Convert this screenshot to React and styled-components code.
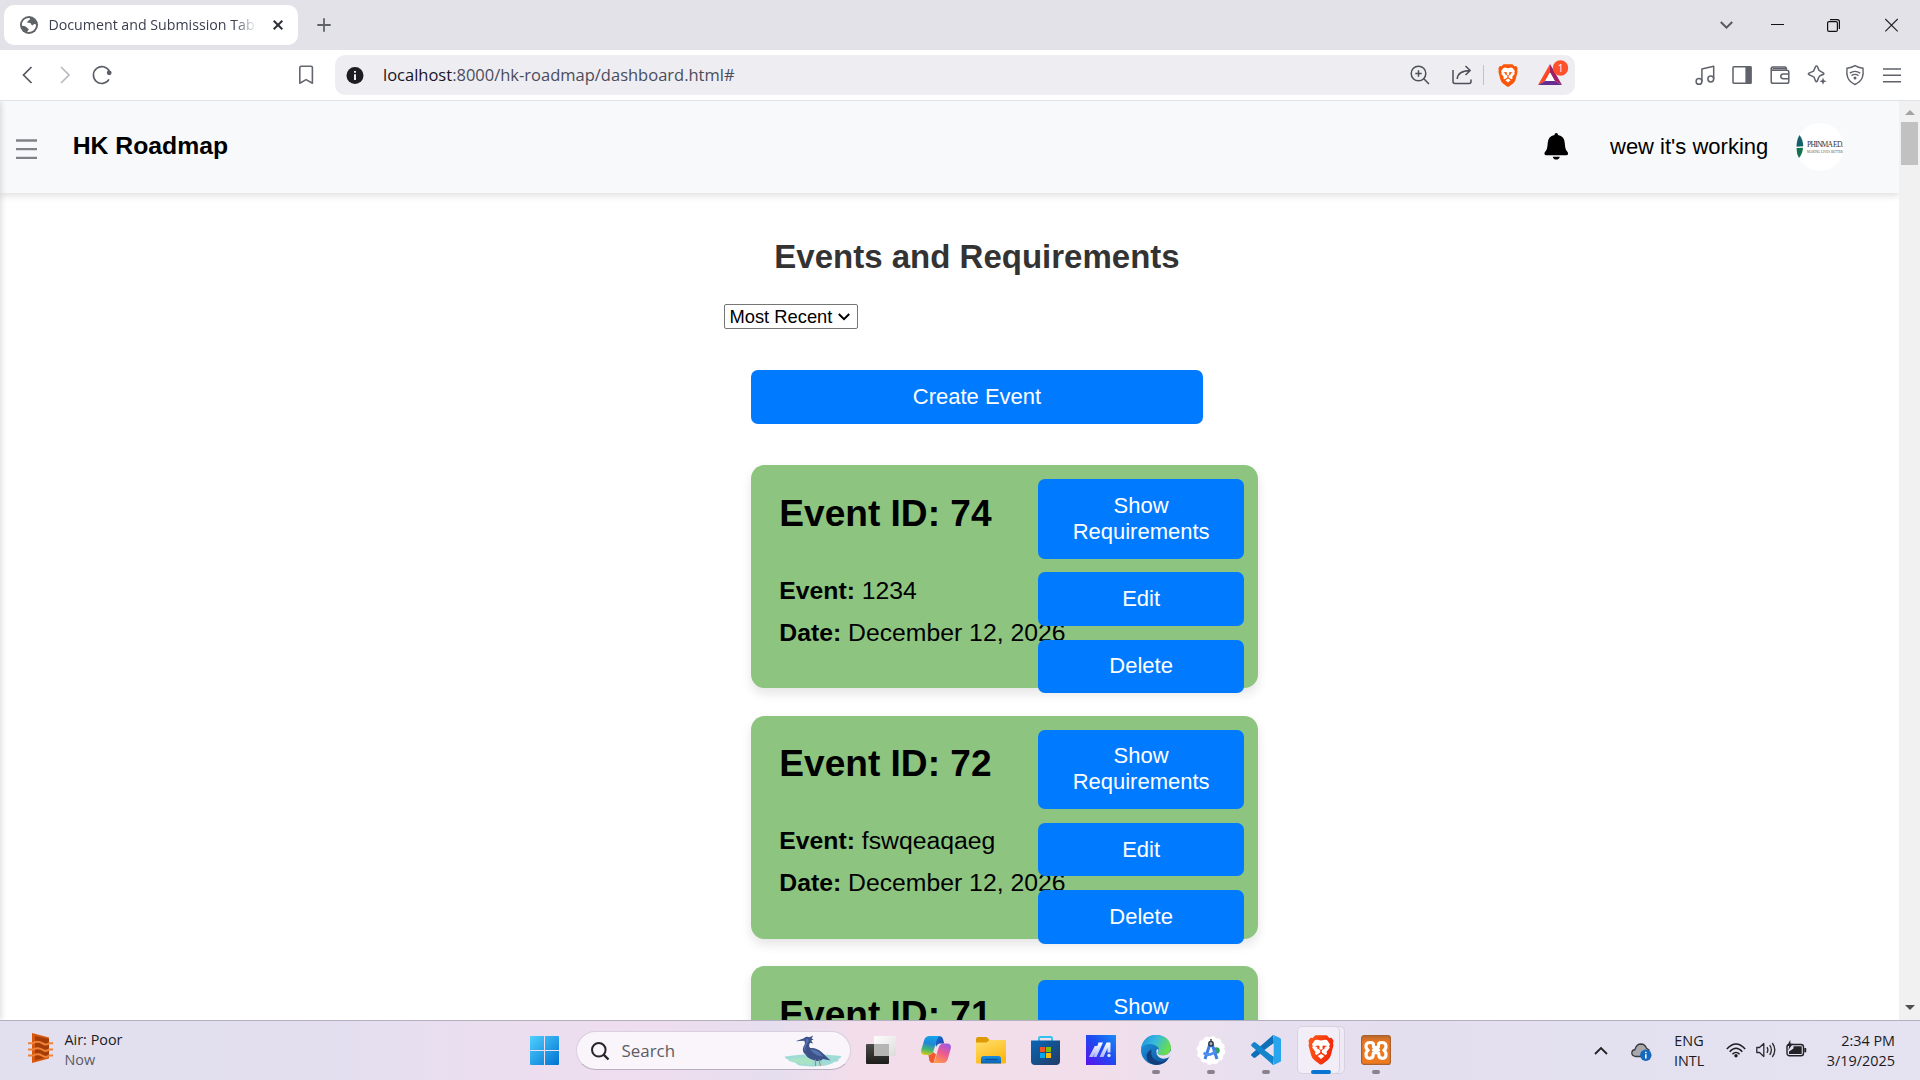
import React from "react";
import styled, { createGlobalStyle } from "styled-components";

const GlobalStyle = createGlobalStyle`
  *, *::before, *::after { box-sizing: border-box; }
  html, body { margin: 0; padding: 0; overflow: hidden; background: #fff; }
`;

const UI = `"Open Sans", "Noto Sans", sans-serif`;
const ARIAL = `"Liberation Sans", Arial, sans-serif`;

const Screen = styled.div`
  width: 1920px;
  height: 1080px;
  display: flex;
  flex-direction: column;
  overflow: hidden;
  background: #fff;
`;

const Glyph = styled.svg`
  display: block;
  flex: none;
  width: ${(p) => p.$w || 20}px;
  height: ${(p) => p.$h || p.$w || 20}px;
  margin-left: ${(p) => (p.$ml === "auto" ? "auto" : `${p.$ml || 0}px`)};
  margin-top: ${(p) => p.$mt || 0}px;
  margin-bottom: ${(p) => p.$mb || 0}px;
  overflow: visible;
  fill: none;
  stroke: ${(p) => p.$stroke || "none"};
  stroke-width: ${(p) => p.$sw || 1.5};
`;

/* ---------- browser chrome ---------- */

const TabStrip = styled.div`
  flex: none;
  height: 50px;
  background: #e3e2e8;
  display: flex;
  align-items: center;
  padding-left: 4px;
`;

const Tab = styled.div`
  width: 294px;
  height: 40px;
  border-radius: 10px;
  background: #fff;
  display: flex;
  align-items: center;
  padding-left: 16px;
`;

const TabTitle = styled.div`
  margin-left: 10.5px;
  width: 207px;
  overflow: hidden;
  white-space: nowrap;
  font: 14.2px/20px ${UI};
  color: #3b3e4f;
  mask-image: linear-gradient(to right, #000 185px, transparent 208px);
`;

const WindowControls = styled.div`
  margin-left: auto;
  padding-right: 22px;
  display: flex;
  align-items: center;
`;

const Toolbar = styled.div`
  flex: none;
  height: 51px;
  border-bottom: 1px solid #e1e1e8;
  background: #fff;
  display: flex;
  align-items: center;
  padding-left: 18px;
`;

const AddressBar = styled.div`
  width: 1240px;
  height: 40px;
  margin-left: 19px;
  border-radius: 10px;
  background: #eeedf2;
  display: flex;
  align-items: center;
  padding-left: 11px;
`;

const Url = styled.div`
  width: 1000px;
  margin-left: 19px;
  white-space: nowrap;
  font: 16.5px/22px ${UI};
  color: #4a4c5c;
  b { font-weight: 400; color: #15151f; }
`;

const ToolIcons = styled.div`
  margin-left: 120px;
  display: flex;
  gap: 17.4px;
`;

const Divider = styled.div`
  width: 1px;
  height: 20px;
  margin-left: 11px;
  background: #c3c2cb;
`;

/* ---------- web page ---------- */

const Viewport = styled.div`
  flex: none;
  height: 919px;
  display: flex;
  overflow: hidden;
`;

const Page = styled.div`
  position: relative;
  width: 1899px;
  height: 100%;
  overflow: hidden;
  font-family: ${ARIAL};
  &::before {
    content: "";
    position: absolute;
    z-index: 2;
    left: -10px;
    top: 0;
    bottom: 0;
    width: 10px;
    box-shadow: 0 0 7px rgba(0, 0, 0, 0.2);
  }
`;

const Header = styled.header`
  height: 92px;
  background: #f8f9fb;
  box-shadow: 0 3px 7px rgba(0, 0, 0, 0.12);
  display: flex;
  align-items: center;
  padding: 0 55.5px 0 16px;
`;

const Brand = styled.div`
  margin-left: 35.7px;
  font-size: 24.75px;
  line-height: 28px;
  font-weight: 700;
  color: #000;
  padding-bottom: 2px;
`;

const User = styled.div`
  margin-left: 41.5px;
  width: 161px;
  white-space: nowrap;
  font-size: 22px;
  line-height: 26px;
  color: #000;
  padding-bottom: 1px;
`;

const Avatar = styled.div`
  width: 48px;
  height: 48px;
  margin-left: 24.500px;
  border-radius: 50%;
  background: #fff;
`;

const Main = styled.main`
  margin-left: 723.5px;
  width: 507px;
  padding-top: 45px;
`;

const Heading = styled.h1`
  margin: 0;
  text-align: center;
  font-size: 33px;
  line-height: 38px;
  font-weight: 700;
  color: #333;
`;

const Sort = styled.div`
  margin-top: 28px;
  width: 134px;
  height: 25px;
  border: 1px solid #767676;
  border-radius: 2px;
  background: #fff;
  display: flex;
  align-items: center;
  justify-content: space-between;
  padding: 0 7px 0 5px;
  font-size: 18.33px;
  line-height: 22px;
  white-space: nowrap;
  color: #000;
`;

const Button = styled.button`
  display: block;
  width: 100%;
  border: 0;
  border-radius: 6.9px;
  padding: 13.75px 27px;
  background: #007bff;
  color: #fff;
  font: 22px/26px ${ARIAL};
  text-align: center;
`;

const Content = styled.div`
  margin-top: 41px;
  padding: 0 27.5px;
`;

const CardList = styled.div`
  margin-top: 41.9px;
  width: 507px;
  display: flex;
  flex-direction: column;
  gap: 27.5px;
`;

const Card = styled.section`
  position: relative;
  height: 223px;
  border-radius: 13.75px;
  background: #8dc480;
  box-shadow: 0 5.5px 11px rgba(0, 0, 0, 0.1);
  padding: 26.5px 28.3px;
  color: #000;
  h2 { margin: 0 0 35px; font-size: 37.1px; line-height: 43px; font-weight: 700; }
  p { margin: 0; font-size: 24.75px; line-height: 42px; white-space: nowrap; }
`;

const CardActions = styled.div`
  position: absolute;
  top: 13.75px;
  right: 13.75px;
  width: 206.25px;
  display: flex;
  flex-direction: column;
  gap: 13.75px;
`;

const Scrollbar = styled.div`
  width: 21px;
  height: 100%;
  background: #f1f1f1;
  display: flex;
  flex-direction: column;
  align-items: center;
  padding: 9px 0 10px;
`;

const Thumb = styled.div`
  width: 17px;
  height: 43px;
  margin-top: 7px;
  margin-bottom: auto;
  background: #c1c1c1;
`;

/* ---------- taskbar ---------- */

const Taskbar = styled.footer`
  flex: none;
  height: 60px;
  border-top: 1px solid #b5b0bf;
  background: linear-gradient(
    to right,
    #e2e0ef 0px, #e3dfef 330px, #ebdeef 500px, #eeddef 650px, #e5deee 775px,
    #f3ddea 860px, #f2deeb 1100px, #ece0ee 1170px, #e5dfef 1300px, #e3e0f0 1600px, #e5e2f1 1920px
  );
  display: flex;
  align-items: flex-start;
  font-family: ${UI};
`;

const Weather = styled.div`
  width: 530px;
  padding: 9px 0 0 28px;
  display: flex;
`;

const Lines = styled.div`
  font-size: 14.4px;
  line-height: 20px;
  color: #1b1b1f;
  white-space: nowrap;
  text-align: ${(p) => p.$align || "left"};
  margin-left: ${(p) => p.$ml || 0}px;
  width: ${(p) => (p.$w ? `${p.$w}px` : "auto")};
  small { display: block; font-size: inherit; color: ${(p) => p.$sub || "inherit"}; }
`;

const SearchBox = styled.div`
  width: 275px;
  height: 39px;
  margin: 10px 2px 0 17px;
  border: 1px solid #d9cfdf;
  border-bottom-color: #b9aec0;
  border-radius: 20px;
  background: #f9f5fb;
  display: flex;
  align-items: center;
  padding: 0 8px 0 14px;
  font-size: 16.9px;
  color: #5d5b62;
  span { margin: 0 auto 0 12.500px; line-height: 22px; }
`;

const TaskButton = styled.div`
  position: relative;
  width: 55px;
  height: 59px;
  padding-top: 14px;
  display: flex;
  flex-direction: column;
  align-items: center;
  gap: 5px;
`;

const Indicator = styled.i`
  width: ${(p) => (p.$active ? 20 : 8)}px;
  height: 4px;
  border-radius: 2px;
  background: ${(p) => (p.$active ? "#0a74d4" : "#87828c")};
`;

const ActiveTaskButton = styled(TaskButton)`
  &::before, &::after {
    content: "";
    position: absolute;
    top: 5px;
    width: 43px;
    height: 48px;
    border-radius: 5px;
    border: 1px solid #d8d2e0;
  }
  &::before { left: 8.5px; background: #eee9f4; }
  &::after { left: 3.5px; background: #f2eef7; }
  & > * { position: relative; z-index: 1; }
`;

const Tray = styled.div`
  margin-left: auto;
  padding: 10px 25px 0 0;
  display: flex;
`;

function BraveLion({ w = 20, h = 23, ml, id, flat }) {
  return (
    <Glyph $w={w} $h={h} $ml={ml} viewBox="0 0 20 23">
      <defs>
        <linearGradient id={id} x1="0" x2="1" y1="0" y2="0.3">
          <stop offset="0" stopColor={flat ? "#fb5607" : "#ff5a1a"} />
          <stop offset="1" stopColor={flat ? "#fb5607" : "#f2280a"} />
        </linearGradient>
      </defs>
      <path
        fill={`url(#${id})`}
        d="M5.6.2H14.4L16.4 2.2 18.2 2.1 19.7 4.6 19.2 6.2 19.6 7.8 17.6 15.6Q17 18 15 19.4L11 22.4Q10 23 9 22.4L5 19.4Q3 18 2.4 15.6L.4 7.8.8 6.2.3 4.6 1.8 2.1 3.6 2.2Z"
      />
      <path
        fill="#fff"
        d="M10 4.2 13 3.6 14.6 3.9 16.9 7 16.3 8.6 16.7 9.8 14.2 13 14.7 14.4 13.4 15.3 11.4 14 10.8 13.7 10.5 12.2 10.9 11.5 13.4 9.9 12.6 9.4 14.9 8.5 11.8 8.1 11.1 8.6 11.3 10.8 10 11.3 8.7 10.8 8.9 8.6 8.2 8.1 5.1 8.5 7.4 9.4 6.6 9.9 9.1 11.5 9.5 12.2 9.2 13.7 8.6 14 6.6 15.3 5.3 14.4 5.8 13 3.3 9.8 3.7 8.6 3.1 7 5.4 3.9 7 3.6Z"
      />
      <path fill="#fff" d="M10 14.6 12.6 16.2 10 18.4 7.4 16.2Z" />
    </Glyph>
  );
}

function BrowserTabs() {
  return (
    <TabStrip>
      <Tab>
        <Glyph $w={18} viewBox="0 0 18 18">
          <circle cx="9" cy="9" r="9" fill="#5f6368" />
          <path
            fill="#fff"
            d="M9.5 1.9C10.6 2.8 9.8 3.8 8.7 4.2 8.5 5.3 7.2 5.2 7 6.2 7.8 7 9.6 6.5 10.6 7.3 11.3 8.1 11.2 9 12.4 9.2 13.6 9.6 13 8.2 14.4 8 15.4 7.9 16 8.6 16.1 9.2A7.1 7.1 0 0 1 7.4 15.9C7.3 14.6 8.6 14.3 8.8 13.2 8.2 12.3 7.2 11.9 6.4 10.9 5 10 3.3 9.7 1.9 9.8A7.1 7.1 0 0 1 9.5 1.9Z"
          />
        </Glyph>
        <TabTitle>Document and Submission Tables</TabTitle>
        <Glyph $w={10} $ml={17} $stroke="#2e3038" $sw={2} viewBox="0 0 10 10">
          <path d="M.7.7 9.3 9.3M9.3.7.7 9.3" />
        </Glyph>
      </Tab>
      <Glyph $w={14} $ml={19} $stroke="#5f6368" $sw={1.8} viewBox="0 0 14 14">
        <path d="M7 .3V13.7M.3 7H13.7" />
      </Glyph>
      <WindowControls>
        <Glyph $w={13} $h={8} $stroke="#55585d" $sw={2} viewBox="0 0 13 8">
          <path d="M.8 1 6.5 6.7 12.2 1" />
        </Glyph>
        <Glyph $w={13} $h={13} $ml={38} $stroke="#111" $sw={1} viewBox="0 0 13 13">
          <path d="M0 5.5H13" />
        </Glyph>
        <Glyph $w={13} $ml={43.5} $stroke="#111" $sw={1.2} viewBox="0 0 13 13">
          <rect x=".6" y="2.6" width="9.8" height="9.8" rx="1.5" />
          <path d="M3 .6H10.2Q12.4.6 12.4 2.8V10" />
        </Glyph>
        <Glyph $w={13} $ml={45} $stroke="#222" $sw={1.1} viewBox="0 0 13 13">
          <path d="M.3 0 12.7 12.400M12.7 0 .3 12.400" />
        </Glyph>
      </WindowControls>
    </TabStrip>
  );
}

function BrowserToolbar() {
  return (
    <Toolbar>
      <Glyph $stroke="#55585f" $sw={1.7} viewBox="0 0 20 20">
        <path d="M13.5 2 5.5 10 13.5 18" />
      </Glyph>
      <Glyph $ml={17} $stroke="#b9babf" $sw={1.7} viewBox="0 0 20 20">
        <path d="M6 2 14 10 6 18" />
      </Glyph>
      <Glyph $ml={17} $stroke="#5b5e66" $sw={1.6} viewBox="0 0 20 20">
        <path d="M17 14.4A8.4 8.4 0 1 1 17.3 6.2" />
        <circle cx="17.2" cy="7.8" r="2.4" fill="#5b5e66" stroke="none" />
      </Glyph>
      <Glyph $ml={184} $stroke="#63666f" $sw={1.6} viewBox="0 0 20 20">
        <path d="M3.8 18.2V2.6Q3.8 1.2 5.2 1.2H15Q16.4 1.2 16.4 2.6V18.2L10.1 14.6Z" strokeLinejoin="round" />
      </Glyph>
      <AddressBar>
        <Glyph $w={18} viewBox="0 0 18 18">
          <circle cx="9" cy="9.5" r="8.5" fill="#1c1c22" />
          <path fill="#eeedf2" d="M8 5h2v1.8H8zM8 8.2h2V14H8z" />
        </Glyph>
        <Url>
          <b>localhost</b>:8000/hk-roadmap/dashboard.html#
        </Url>
        <Glyph $ml={27} $stroke="#4c4e58" $sw={1.5} viewBox="0 0 20 20">
          <circle cx="8.5" cy="8.5" r="7.3" />
          <path d="M13.8 13.8 19 19M8.5 5.3V11.7M5.3 8.5H11.7" />
        </Glyph>
        <Glyph $ml={22} $stroke="#4c4e58" $sw={1.5} viewBox="0 0 20 20">
          <path d="M1 5V16.6Q1 18.6 3 18.6H17Q19 18.6 19 16.6V14.5" />
          <path d="M5.2 14Q5.6 6 17.8 5.5M13.5 1 18.2 5.5 13.5 10" strokeLinejoin="round" />
        </Glyph>
        <Divider />
        <BraveLion ml={14} id="brave-shield" flat />
        <Glyph $w={24} $h={22} $ml={20} viewBox="0 0 24 22">
          <path fill="#ff4724" d="M12 0 0 21 7.2 17 12 8.5Z" />
          <path fill="#9e1f63" d="M12 0 24 21 16.8 17 12 8.5Z" />
          <path fill="#662d91" d="M0 21H24L16.8 17H7.2Z" />
          <path fill="#fff" d="M12 8.5 16.8 17H7.2Z" />
          <circle cx="22.5" cy="4" r="7.7" fill="#ff5029" />
          <text x="22.5" y="7.6" textAnchor="middle" fontFamily="Open Sans, sans-serif" fontSize="10" fill="#fff">1</text>
        </Glyph>
      </AddressBar>
      <ToolIcons>
        <Glyph $stroke="#5f626b" viewBox="0 0 20 20">
          <circle cx="4" cy="16.4" r="2.9" />
          <circle cx="15.8" cy="14" r="2.9" />
          <path d="M6.9 16.4V4L18.7 1.3V14" strokeLinejoin="round" />
        </Glyph>
        <Glyph $stroke="#5f626b" viewBox="0 0 20 20">
          <rect x="1" y="1.8" width="18" height="16.4" rx=".8" />
          <path d="M13.4 1.5H19.5V18.5H13.4Z" fill="#5f626b" stroke="none" />
        </Glyph>
        <Glyph $stroke="#5f626b" viewBox="0 0 20 20">
          <path d="M1.2 3.6V16.4Q1.2 18.2 3 18.2H17Q18.8 18.2 18.8 16.4V7Q18.8 5.2 17 5.2H2.8Q1.2 5.2 1.2 3.6 1.2 2 2.8 2H15Q16.2 2 16.6 4.6" />
          <path d="M18.8 8.9H13.2Q10.8 8.9 10.8 11.3 10.8 13.7 13.2 13.7H18.8" />
          <path d="M2.5 3.6H16" />
        </Glyph>
        <Glyph $stroke="#5f626b" viewBox="0 0 20 20">
          <path d="M9.5.9Q10.2.9 10.5 1.8L12 5.4 16.2 7.8Q17.3 8.4 16.6 9.2L13 10.8 11.6 12.6 10.4 15.9Q9.5 17.6 8.5 15.9L7.1 12.2 2 9.6Q.7 9 2 8.1L6.5 6.1 8.5 1.8Q8.9.9 9.5.9Z" strokeLinejoin="round" />
          <path d="M16 12.6 17 15.2 19.6 16.2 17 17.2 16 19.8 15 17.2 12.4 16.2 15 15.2Z" fill="#5f626b" stroke="none" />
        </Glyph>
        <Glyph $stroke="#5f626b" $sw={1.4} viewBox="0 0 20 20">
          <path d="M10 .6Q13 2.6 18 3.2 18.6 9 17.3 12.6 15.5 17 10 19.5 4.5 17 2.7 12.6 1.4 9 2 3.2 7 2.6 10 .6Z" />
          <path d="M4.8 8.2Q10 4.6 15.2 8.2M6.5 10.6Q10 8.2 13.5 10.6" />
          <circle cx="10" cy="13" r="1.5" fill="#5f626b" stroke="none" />
        </Glyph>
        <Glyph $stroke="#5f626b" $sw={1.5} viewBox="0 0 20 20">
          <path d="M1 4H19M1 10.3H19M1 16.8H19" />
        </Glyph>
      </ToolIcons>
    </Toolbar>
  );
}

const events = [
  { id: 74, name: "1234", date: "December 12, 2026" },
  { id: 72, name: "fswqeaqaeg", date: "December 12, 2026" },
  { id: 71, name: "", date: "" },
];

function EventCard({ event }) {
  return (
    <Card>
      <h2>Event ID: {event.id}</h2>
      {event.name && (
        <>
          <p><b>Event:</b> {event.name}</p>
          <p><b>Date:</b> {event.date}</p>
        </>
      )}
      <CardActions>
        <Button>Show Requirements</Button>
        {event.name && (
          <>
            <Button>Edit</Button>
            <Button>Delete</Button>
          </>
        )}
      </CardActions>
    </Card>
  );
}

function Dashboard() {
  return (
    <Viewport>
      <Page>
        <Header>
          <Glyph $w={21} $h={21} $stroke="#808285" $sw={2.3} viewBox="0 0 21 21">
            <path d="M0 3.5H21M0 12.2H21M0 20.800H21" />
          </Glyph>
          <Brand>HK Roadmap</Brand>
          <Glyph $w={24.5} $h={27} $ml="auto" $mb={2} viewBox="0 0 24 27">
            <path fill="#000" d="M12 0Q13.7 0 13.8 2.1 20.4 3.6 20.6 10.5 20.7 16.5 23.3 19 24 20 23.8 21 23.5 22.2 22 22.2H2Q.5 22.2.2 21 0 20 .7 19 3.3 16.5 3.4 10.5 3.6 3.6 10.2 2.1 10.3 0 12 0ZM8.5 23.8H15.5Q15 26.6 12 26.6 9 26.6 8.5 23.8Z" />
          </Glyph>
          <User>wew it's working</User>
          <Avatar>
            <Glyph $w={48} viewBox="0 0 48 48">
              <path fill="#14606a" d="M3.5 12Q7.200 17 7.300 23.300L.5 23.700Q.5 17 3.500 12Z" />
              <path fill="#12734c" d="M7 24.8Q6.500 31 3 35Q.5 31 .5 25Z" />
              <text x="11" y="24.300" fontFamily="Liberation Serif, serif" fontSize="7.600" textLength="36.500" lengthAdjust="spacing" fill="#333">PHINMA ED.</text>
              <text x="11" y="29.600" fontFamily="Liberation Serif, serif" fontSize="3.600" textLength="36" lengthAdjust="spacingAndGlyphs" fill="#555">MAKING LIVES BETTER</text>
            </Glyph>
          </Avatar>
        </Header>
        <Main>
          <Heading>Events and Requirements</Heading>
          <Sort>
            Most Recent
            <Glyph $w={12} $h={8} $stroke="#000" $sw={2} viewBox="0 0 12 8">
              <path d="M.8 1 6 6.2 11.2 1" />
            </Glyph>
          </Sort>
          <Content>
            <Button>Create Event</Button>
            <CardList>
              {events.map((event) => (
                <EventCard key={event.id} event={event} />
              ))}
            </CardList>
          </Content>
        </Main>
      </Page>
      <Scrollbar>
        <Glyph $w={10} $h={5} viewBox="0 0 10 5"><path fill="#a3a3a3" d="M0 5 5 0 10 5Z" /></Glyph>
        <Thumb />
        <Glyph $w={10} $h={5} viewBox="0 0 10 5"><path fill="#505050" d="M0 0 5 5 10 0Z" /></Glyph>
      </Scrollbar>
    </Viewport>
  );
}

function Heron() {
  return (
    <Glyph $w={58} $h={32} viewBox="0 0 58 32">
      <path fill="#9fdcd8" d="M1 21.5Q28 17.5 57 21Q58 23 54 24Q57 26 50 27Q46 31 28 31.5 12 31 12 28 4 26 4 24.5 0 23 1 21.5Z" />
      <path fill="#a7e3c4" d="M5 24Q20 21 30 23L28 30Q16 30 14 27.5 6 26 5 24Z" />
      <path fill="#3d5288" d="M11.5 6.3 20 3.2Q22 1 25.5 2.2L29.2.6 27.6 3.4 29.6 4.5 27.2 5.5 29 8.5 26 7.7Q24 11.5 26.5 13 33 12.5 38 17.5L46.5 25.5 39 24Q36.5 27 31 25.5 24 24 21.5 19.5 17.5 16.5 19.5 11.5 22 8.5 20.2 5.7Z" />
      <path fill="#5574ae" d="M23 3.5Q26 4.5 23.8 7.5 20.5 12 21.5 16.5 19 14 20.5 10.5 23 7 21.5 5ZM26 14.5Q32 14 36 18L39 21.5Q31 21 26 14.5Z" />
      <path stroke="#b08a67" strokeWidth="1.1" d="M31.5 24.5V31M35 24.5 36.5 31" />
    </Glyph>
  );
}

function WindowsTaskbar() {
  return (
    <Taskbar>
      <Weather>
        <Glyph $w={25} $h={30} $mt={3} viewBox="0 0 25 30">
          <path fill="#d9580f" d="M4 0 21 4.5V25.5L4 30Z" />
          <path fill="#a43d08" d="M7 3 21 6V24L7 27Z" />
          <path stroke="#f08238" strokeWidth="2" d="M0 10.2H5Q10 7.5 14 10.2T21 10.2H25M0 16.5H5Q10 13.8 14 16.5T21 16.5H25M0 22.6H5Q10 20 14 22.6T21 22.6H25" />
        </Glyph>
        <Lines $ml={11.5} $sub="#5c5a63">
          Air: Poor<small>Now</small>
        </Lines>
      </Weather>
      <Glyph $w={29} $mt={15} viewBox="0 0 29 29">
        <defs>
          <linearGradient id="win" x1="0" y1="0" x2="1" y2="1">
            <stop offset="0" stopColor="#4fd0ff" />
            <stop offset="1" stopColor="#0072d2" />
          </linearGradient>
        </defs>
        <path fill="url(#win)" d="M1 0H14V14H0V1Q0 0 1 0ZM15 0H28Q29 0 29 1V14H15ZM0 15H14V29H1Q0 29 0 28ZM15 15H29V28Q29 29 28 29H15Z" />
      </Glyph>
      <SearchBox>
        <Glyph $w={18} $stroke="#26242a" $sw={2} viewBox="0 0 18 18">
          <circle cx="7.8" cy="7.8" r="6.8" />
          <path d="M12.6 12.6 17.5 17.5" strokeWidth="2.4" />
        </Glyph>
        <span>Search</span>
        <Heron />
      </SearchBox>

      <TaskButton>
        <Glyph $w={30} viewBox="0 0 30 30">
          <defs>
            <linearGradient id="tvd" x1="0" y1="0" x2="0" y2="1"><stop offset="0" stopColor="#4a4a48" /><stop offset="1" stopColor="#1d1d1c" /></linearGradient>
            <linearGradient id="tvl" x1="0" y1="0" x2="1" y2="1"><stop offset="0" stopColor="#fff" /><stop offset="1" stopColor="#dcdcdc" /></linearGradient>
          </defs>
          <rect x="0" y="9" width="23" height="20" rx="1" fill="url(#tvd)" />
          <rect x="8" y="1" width="22" height="20" rx="1" fill="url(#tvl)" opacity=".95" />
          <rect x="8" y="9" width="15" height="12" fill="#b5b5b3" />
        </Glyph>
      </TaskButton>
      <TaskButton>
        <Glyph $w={30} viewBox="0 0 30 30">
          <defs>
            <linearGradient id="cp1" x1=".3" y1="0" x2=".1" y2="1"><stop offset="0" stopColor="#16a3e6" /><stop offset=".35" stopColor="#1f86d8" /><stop offset=".7" stopColor="#4cba68" /><stop offset="1" stopColor="#f1c80c" /></linearGradient>
            <linearGradient id="cp2" x1=".8" y1="0" x2=".3" y2="1"><stop offset="0" stopColor="#9d58e6" /><stop offset=".5" stopColor="#ef5b8c" /><stop offset="1" stopColor="#ff9a4c" /></linearGradient>
            <linearGradient id="cp3" x1="0" y1="0" x2="1" y2="1"><stop offset="0" stopColor="#1c74d8" /><stop offset="1" stopColor="#1a3fae" /></linearGradient>
          </defs>
          <path fill="url(#cp3)" d="M13 1H18Q21 1 22 4L23.2 8.5H19Q16.5 8.5 15 12Z" />
          <path fill="url(#cp1)" d="M8.5 1H19Q16.5 2 15.5 6L12.5 16Q11.3 20 7.5 20H4.5Q-.8 20 .2 15L3.4 4.6Q4.7 1 8.5 1Z" />
          <path fill="#ef5b2c" d="M7.5 20Q11 20 12 17L15 19.5 12.5 28H11.5Q9 28 8.2 25Z" />
          <path fill="url(#cp2)" d="M22.5 8.5H25.5Q30.8 8.5 29.8 13.5L26.6 24.4Q25.3 28 21.5 28H11Q13.5 27.2 14.5 23L17.5 13Q18.7 8.5 22.5 8.5Z" />
        </Glyph>
      </TaskButton>
      <TaskButton>
        <Glyph $w={30} viewBox="0 0 30 30">
          <defs>
            <linearGradient id="fold" x1="0" y1="0" x2="0.5" y2="1"><stop offset="0" stopColor="#ffdf6f" /><stop offset="1" stopColor="#fdb913" /></linearGradient>
            <linearGradient id="foldb" x1="0" y1="0" x2="0" y2="1"><stop offset="0" stopColor="#1a8fe0" /><stop offset="1" stopColor="#0c62b4" /></linearGradient>
          </defs>
          <path fill="#dd9a05" d="M0 4Q0 2 2 2H9.5Q11 2 12 3.2L14 5.5H28V10H0Z" />
          <path fill="url(#fold)" d="M0 7.5H10.5L13.5 5H29Q30 5 30 6V27.5Q30 28.5 29 28.5H1Q0 28.5 0 27.5Z" />
          <path fill="url(#foldb)" d="M5 28.5V23.5Q5 21 7.5 21H22.5Q25 21 25 23.5V28.5Z" />
          <path stroke="#0b4f96" strokeWidth="1.2" d="M9 24.5H21.5" />
        </Glyph>
      </TaskButton>
      <TaskButton>
        <Glyph $w={30} viewBox="0 0 30 30">
          <defs>
            <linearGradient id="store" x1="0" y1="0" x2="1" y2="1"><stop offset="0" stopColor="#0867b7" /><stop offset="1" stopColor="#233a63" /></linearGradient>
          </defs>
          <path stroke="#2fc3f2" strokeWidth="1.8" d="M8 6V3Q8 2 9 2H20Q21 2 21 3V6" />
          <path fill="url(#store)" d="M0 5.5H29V26Q29 30 25 30H4Q0 30 0 26Z" />
          <path fill="#f35325" d="M9 12H14V17H9Z" />
          <path fill="#81bc06" d="M15 12H20V17H15Z" />
          <path fill="#05a6f0" d="M9 18H14V23H9Z" />
          <path fill="#ffba08" d="M15 18H20V23H15Z" />
        </Glyph>
      </TaskButton>
      <TaskButton>
        <Glyph $w={30} viewBox="0 0 30 30">
          <defs>
            <linearGradient id="ma" x1="0" y1="1" x2="1" y2="0"><stop offset="0" stopColor="#5d10ee" /><stop offset=".55" stopColor="#1c4df0" /><stop offset="1" stopColor="#1a8cf8" /></linearGradient>
            <linearGradient id="mas" x1="0" y1="0" x2="0" y2="1"><stop offset="0" stopColor="#fff" /><stop offset="1" stopColor="#aab6fa" /></linearGradient>
          </defs>
          <rect width="30" height="30" fill="url(#ma)" />
          <path fill="url(#mas)" d="M8.800 11H12L7 22H3ZM12.500 7.500H17L10.500 22H7.500ZM20.500 7.500H24.500V17.500H21.500V13L17.500 22H13.500Z" />
          <circle cx="23" cy="20.500" r="1.700" fill="#dfe5ff" />
        </Glyph>
      </TaskButton>
      <TaskButton>
        <Glyph $w={30} viewBox="0 0 30 30">
          <defs>
            <linearGradient id="ed1" x1="0" y1="0" x2="1" y2=".4"><stop offset="0" stopColor="#1f8fd8" /><stop offset=".5" stopColor="#35b9e0" /><stop offset="1" stopColor="#68dd4e" /></linearGradient>
            <linearGradient id="ed2" x1="0" y1="0" x2="1" y2="1"><stop offset="0" stopColor="#1f9ce6" /><stop offset="1" stopColor="#0b4b98" /></linearGradient>
          </defs>
          <circle cx="15" cy="15" r="15" fill="url(#ed2)" />
          <path fill="url(#ed1)" d="M.3 12.5Q3 0 15 0 29 .5 30 13 29.5 19.8 22.5 20.3 17.5 20.5 16.5 18.6 16.3 17.8 17.2 16.9 19 14.5 16.5 11.8 12 8 6 9.3 2 10.2.3 12.5Z" />
          <path fill="#123f7d" d="M10.5 14.5Q8.5 24 18 26.5 23.5 27.5 28 22.5 24 30 15 30 6 29 5.5 21 6 16.5 10.5 14.5Z" />
          <path fill="#e9e0ef" d="M16.8 18.8Q18 20.4 22.5 20.3 27.5 20 29.8 15.5 31 19.5 28 22.3 23 25 18.5 22.5 14.5 19.5 15.6 15 16.5 12.8 17.6 15 17.5 16.5 16.5 17.6Z" />
        </Glyph>
        <Indicator />
      </TaskButton>
      <TaskButton>
        <Glyph $w={30} viewBox="0 0 30 30">
          <circle cx="15" cy="15.5" r="13.4" fill="#fff" />
          <circle cx="15" cy="15.5" r="13.6" stroke="#fff" strokeWidth="1.600" strokeDasharray="3.500 3.620" />
          <circle cx="20.5" cy="15.5" r="3.2" fill="#2f9e58" />
          <path stroke="#3f7fe8" strokeWidth="3" d="M13.8 9.5 9 24M16.2 9.5 21 24" />
          <path stroke="#4f8ef0" strokeWidth="2.8" d="M7.5 18Q15 22 20 15.5" />
          <circle cx="15" cy="8.8" r="2.2" fill="#a9b2bd" stroke="#333d4a" strokeWidth="1.5" />
          <path stroke="#333d4a" strokeWidth="1.4" d="M15 4V7" />
        </Glyph>
        <Indicator />
      </TaskButton>
      <TaskButton>
        <Glyph $w={30} viewBox="0 0 30 30">
          <path fill="#0f6fb8" d="M22 0 23 8 4.5 22.5Q3.3 23.3 2.4 22.5L.5 20.8Q-.4 19.8.7 18.8Z" />
          <path fill="#1484cd" d="M22 30 23 22 4.5 7.5Q3.3 6.7 2.4 7.5L.5 9.2Q-.4 10.2.7 11.2Z" />
          <path fill="#29a4ee" d="M21.5.3Q22.2-.2 23 .2L29 3Q30 3.5 30 4.6V25.4Q30 26.5 29 27L23 29.8Q22.2 30.2 21.5 29.7 22.5 30 22.5 28.5V1.5Q22.5 0 21.5.3Z" />
          <path fill="#e8e0ee" d="M22.4 8.5V21.5L13.5 15Z" />
        </Glyph>
        <Indicator />
      </TaskButton>
      <ActiveTaskButton>
        <BraveLion w={26} h={30} id="brave-task" />
        <Indicator $active />
      </ActiveTaskButton>
      <TaskButton>
        <Glyph $w={30} viewBox="0 0 30 30">
          <defs>
            <linearGradient id="xa" x1="0" y1="0" x2="0" y2="1"><stop offset="0" stopColor="#b9682f" /><stop offset=".2" stopColor="#e87722" /><stop offset="1" stopColor="#ee7a20" /></linearGradient>
          </defs>
          <rect x=".6" y=".6" width="28.8" height="28.8" rx="2.5" fill="url(#xa)" stroke="#a9622f" strokeWidth="1.2" />
          <path
            stroke="#fff"
            strokeWidth="3.200"
            strokeLinejoin="round"
            d="M9.500 7.500Q12.500 7.500 12.500 10V11.300Q12.500 12.500 13.700 12.500H16.300Q17.500 12.500 17.500 11.300V10Q17.500 7.500 20.500 7.500 25 7.500 25 11.300 25 14 22.800 15.300 25 16.500 25 19.500 25 23.300 21.500 23.300 17.800 23.300 17.800 20V19Q17.800 17.600 16.300 17.600H13.700Q12.200 17.600 12.200 19V20Q12.200 23.300 8.500 23.300 5 23.300 5 19.500 5 16.500 7.200 15.300 5 14 5 11.300 5 7.500 9.500 7.500Z"
          />
          <path stroke="#fff" strokeWidth="2.200" d="M11 15H19" />
        </Glyph>
        <Indicator />
      </TaskButton>

      <Tray>
        <Glyph $w={14} $h={8} $mt={15.5} $stroke="#222" $sw={1.8} viewBox="0 0 14 8">
          <path d="M1 7 7 1 13 7" />
        </Glyph>
        <Glyph $w={21} $h={18} $ml={22.5} $mt={12} viewBox="0 0 21 18">
          <path fill="#a9a9ad" stroke="#3b3b40" strokeWidth="1.3" d="M4.5 13.5Q.8 13 .8 9.8.9 7 4 6.5 5.5 1 10 1 14 1.2 15.3 5L18 7 12 13.5Z" />
          <circle cx="14.8" cy="12.3" r="5.7" fill="#1468bd" />
          <path fill="#fff" d="M14 8.8H15.6V10.3H14ZM14 11.2H15.6V15.6H14Z" />
        </Glyph>
        <Lines $ml={22.5} $w={30} $align="center">ENG<small>INTL</small></Lines>
        <Glyph $w={20} $h={15} $ml={22} $mt={12} $stroke="#1c1c20" $sw={1.4} viewBox="0 0 20 15">
          <path d="M.8 6Q10-4 19.2 6M3.7 8.8Q10 1.8 16.3 8.8M6.4 11.2Q10 7.5 13.6 11.2" />
          <circle cx="10" cy="12.8" r="1.7" fill="#1c1c20" stroke="none" />
        </Glyph>
        <Glyph $w={20} $h={16} $ml={10} $mt={11} $stroke="#2a2a2e" $sw={1.3} viewBox="0 0 20 16">
          <path d="M.8 5.5H3.5L7.8 1.5V14.5L3.5 10.5H.8Z" strokeLinejoin="round" />
          <path d="M11 5.2Q12.8 8 11 10.8M13.7 3.2Q17 8 13.7 12.8M16.3 1Q21.3 8 16.3 15" />
        </Glyph>
        <Glyph $w={21} $h={17} $ml={10} $mt={9} viewBox="0 0 21 17">
          <rect x="1" y="4.5" width="16.5" height="11.3" rx="2.5" stroke="#222226" strokeWidth="1.4" />
          <path fill="#222226" d="M7.5 6.3H15.7V14H3V11.5L7.5 8.5ZM18.3 8H20.2V12.2H18.3ZM4.2 0 1 6H3.2L2.3 10.3 6.8 3.8H4.5Z" />
        </Glyph>
        <Lines $w={88} $align="right">2:34 PM<small>3/19/2025</small></Lines>
      </Tray>
    </Taskbar>
  );
}

export default function App() {
  return (
    <Screen>
      <GlobalStyle />
      <BrowserTabs />
      <BrowserToolbar />
      <Dashboard />
      <WindowsTaskbar />
    </Screen>
  );
}
